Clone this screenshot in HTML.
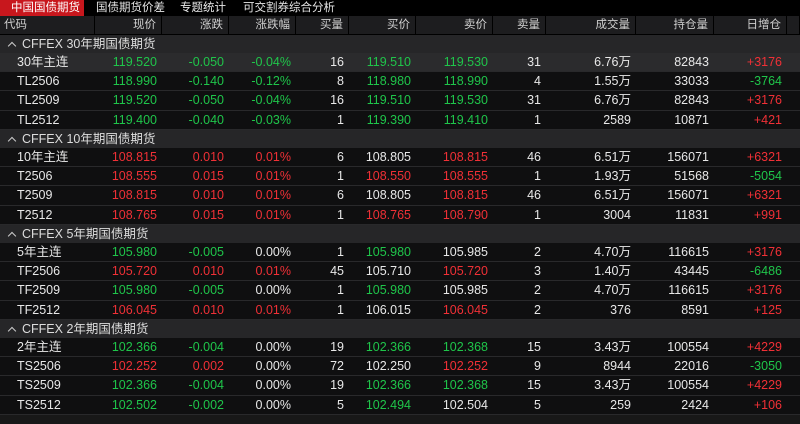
<!DOCTYPE html>
<html><head><meta charset="utf-8"><style>
*{margin:0;padding:0;box-sizing:border-box}
body{width:800px;height:424px;background:#181818;font-family:"Liberation Sans","Noto Sans CJK SC",sans-serif;font-size:12.5px;color:#e8e8e8;overflow:hidden;position:relative}
.tabs{height:16px;background:#000;position:relative;font-size:11.5px;line-height:16px}
.tabs div{position:absolute;top:0;color:#e6e6e6;white-space:nowrap}
.tabs .on{left:0;width:84px;background:#c8171d;color:#fff;padding-left:11px}
.row{display:flex;position:relative;white-space:nowrap}
.row span{display:block;text-align:right;padding-right:5px;overflow:hidden}
.h{height:19px;line-height:19px;background:#1d1d1f;color:#cfcfcf;font-size:11.5px;border-bottom:1px solid #000}
.h span{border-right:1px solid #000}
.h span:first-child{text-align:left;padding-left:4px}
.g{height:18px;line-height:18px;background:#262628;color:#ddd;padding-left:8px;align-items:center}
.r{height:19px;line-height:18px;background:#0f0f10;border-bottom:1px solid #29292b}
.r.t{height:20px;line-height:19px}
.r.sel{background:#2b2b2d}
.r span:first-child{text-align:left;padding-left:17px}
.G{color:#1fc54a}.R{color:#f03036}
.g i{display:block;width:6px;height:6px;border-left:1.5px solid #ccc;border-top:1.5px solid #ccc;transform:rotate(45deg);margin:3px 7px 0 1px;flex:none}
</style></head><body>
<div class="tabs"><div class="on">中国国债期货</div><div style="left:96px">国债期货价差</div><div style="left:180px">专题统计</div><div style="left:243px">可交割券综合分析</div></div>
<div id="t"></div>
<script>
var W=[95,67,67,67,53,67,77,53,90,78,73,13];
function row(cls,cells){var s='<div class="row '+cls+'">';cells.forEach(function(c,i){var k='';if(typeof c=='string'&&c[0]=='!'){k=c[1];c=c.slice(2);}s+='<span class="'+k+'" style="width:'+W[i]+'px">'+c+'</span>';});return s+'</div>';}
var h=row('h',['代码','现价','涨跌','涨跌幅','买量','买价','卖价','卖量','成交量','持仓量','日增仓','']);
var G=[['CFFEX 30年期国债期货',[
['30年主连','!G119.520','!G-0.050','!G-0.04%','16','!G119.510','!G119.530','31','6.76万','82843','!R+3176'],
['TL2506','!G118.990','!G-0.140','!G-0.12%','8','!G118.980','!G118.990','4','1.55万','33033','!G-3764'],
['TL2509','!G119.520','!G-0.050','!G-0.04%','16','!G119.510','!G119.530','31','6.76万','82843','!R+3176'],
['TL2512','!G119.400','!G-0.040','!G-0.03%','1','!G119.390','!G119.410','1','2589','10871','!R+421']]],
['CFFEX 10年期国债期货',[
['10年主连','!R108.815','!R0.010','!R0.01%','6','108.805','!R108.815','46','6.51万','156071','!R+6321'],
['T2506','!R108.555','!R0.015','!R0.01%','1','!R108.550','!R108.555','1','1.93万','51568','!G-5054'],
['T2509','!R108.815','!R0.010','!R0.01%','6','108.805','!R108.815','46','6.51万','156071','!R+6321'],
['T2512','!R108.765','!R0.015','!R0.01%','1','!R108.765','!R108.790','1','3004','11831','!R+991']]],
['CFFEX 5年期国债期货',[
['5年主连','!G105.980','!G-0.005','0.00%','1','!G105.980','105.985','2','4.70万','116615','!R+3176'],
['TF2506','!R105.720','!R0.010','!R0.01%','45','105.710','!R105.720','3','1.40万','43445','!G-6486'],
['TF2509','!G105.980','!G-0.005','0.00%','1','!G105.980','105.985','2','4.70万','116615','!R+3176'],
['TF2512','!R106.045','!R0.010','!R0.01%','1','106.015','!R106.045','2','376','8591','!R+125']]],
['CFFEX 2年期国债期货',[
['2年主连','!G102.366','!G-0.004','0.00%','19','!G102.366','!G102.368','15','3.43万','100554','!R+4229'],
['TS2506','!R102.252','!R0.002','0.00%','72','102.250','!R102.252','9','8944','22016','!G-3050'],
['TS2509','!G102.366','!G-0.004','0.00%','19','!G102.366','!G102.368','15','3.43万','100554','!R+4229'],
['TS2512','!G102.502','!G-0.002','0.00%','5','!G102.494','102.504','5','259','2424','!R+106']]]];
G.forEach(function(g,gi){h+='<div class="row g"><i></i>'+g[0]+'</div>';g[1].forEach(function(r,ri){r.push('');h+=row('r'+(ri==2?' t':'')+(gi==0&&ri==0?' sel':''),r);});});
document.getElementById('t').innerHTML=h;
</script>
</body></html>
